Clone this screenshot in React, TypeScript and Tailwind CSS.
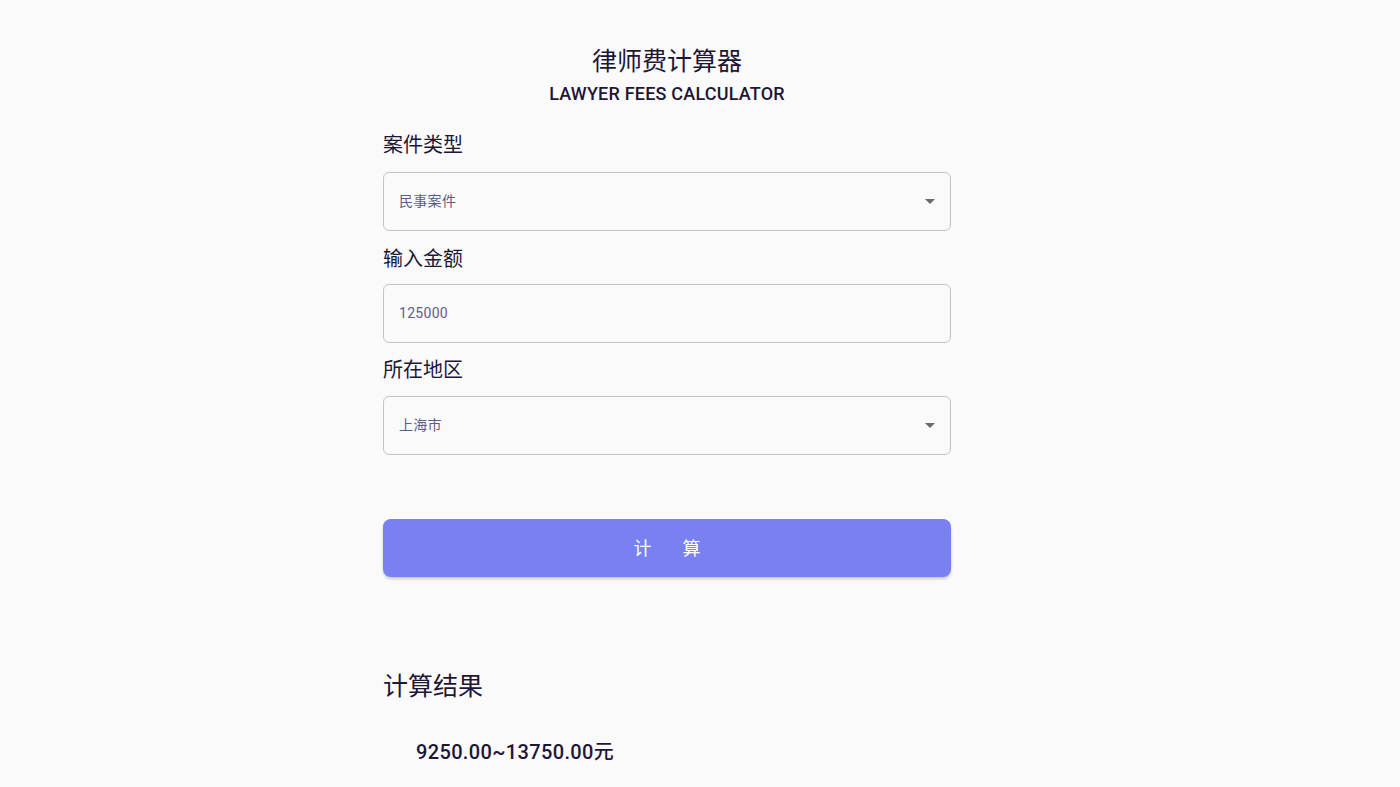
import React from "react";

const font = { fontFamily: 'Roboto, "Noto Sans CJK SC", sans-serif' };

function Caret() {
  return (
    <svg width="10" height="5" viewBox="0 0 10 5" className="shrink-0">
      <path d="M0 0 L10 0 L5 5 Z" fill="#6b6670" />
    </svg>
  );
}

function Field({ value, select }: { value: string; select?: boolean }) {
  return (
    <div className="h-[59px] w-full rounded-[6px] border border-[#c4c4c4] flex items-center pl-[15px] pr-[15px]">
      <span className="flex-1 text-[14px] text-[#5a5d8c] tracking-[0.3px]">{value}</span>
      {select && <Caret />}
    </div>
  );
}

export default function App() {
  return (
    <div className="min-h-[787px] bg-[#fafafa] text-[#1e1636]" style={font}>
      <div className="flex justify-center pr-[66px]">
        <div className="w-[568px] pt-[46px]">
          <div className="text-center">
            <div className="text-[25px] leading-[32px]">律师费计算器</div>
            <div className="mt-[4px] text-[18px] leading-[24px] font-medium tracking-[0.2px]">LAWYER FEES CALCULATOR</div>
          </div>

          <div className="mt-[25px] text-[20px] leading-[28px]">案件类型</div>
          <div className="mt-[13px]">
            <Field value="民事案件" select />
          </div>

          <div className="mt-[14px] text-[20px] leading-[28px]">输入金额</div>
          <div className="mt-[11px]">
            <Field value="125000" />
          </div>

          <div className="mt-[13px] text-[20px] leading-[28px]">所在地区</div>
          <div className="mt-[12px]">
            <Field value="上海市" select />
          </div>

          <button className="mt-[64px] h-[58px] w-full rounded-[8px] bg-[#7880f2] text-white text-[18px] flex items-center justify-center gap-[31px] shadow-[0_2px_3px_rgba(0,0,0,0.2)]">
            <span>计</span>
            <span>算</span>
          </button>

          <div className="mt-[94px] text-[25px] leading-[32px]">计算结果</div>
          <div className="mt-[35px] pl-[33px] text-[20px] leading-[28px] font-medium tracking-[0.35px]">9250.00~13750.00元</div>
        </div>
      </div>
    </div>
  );
}
